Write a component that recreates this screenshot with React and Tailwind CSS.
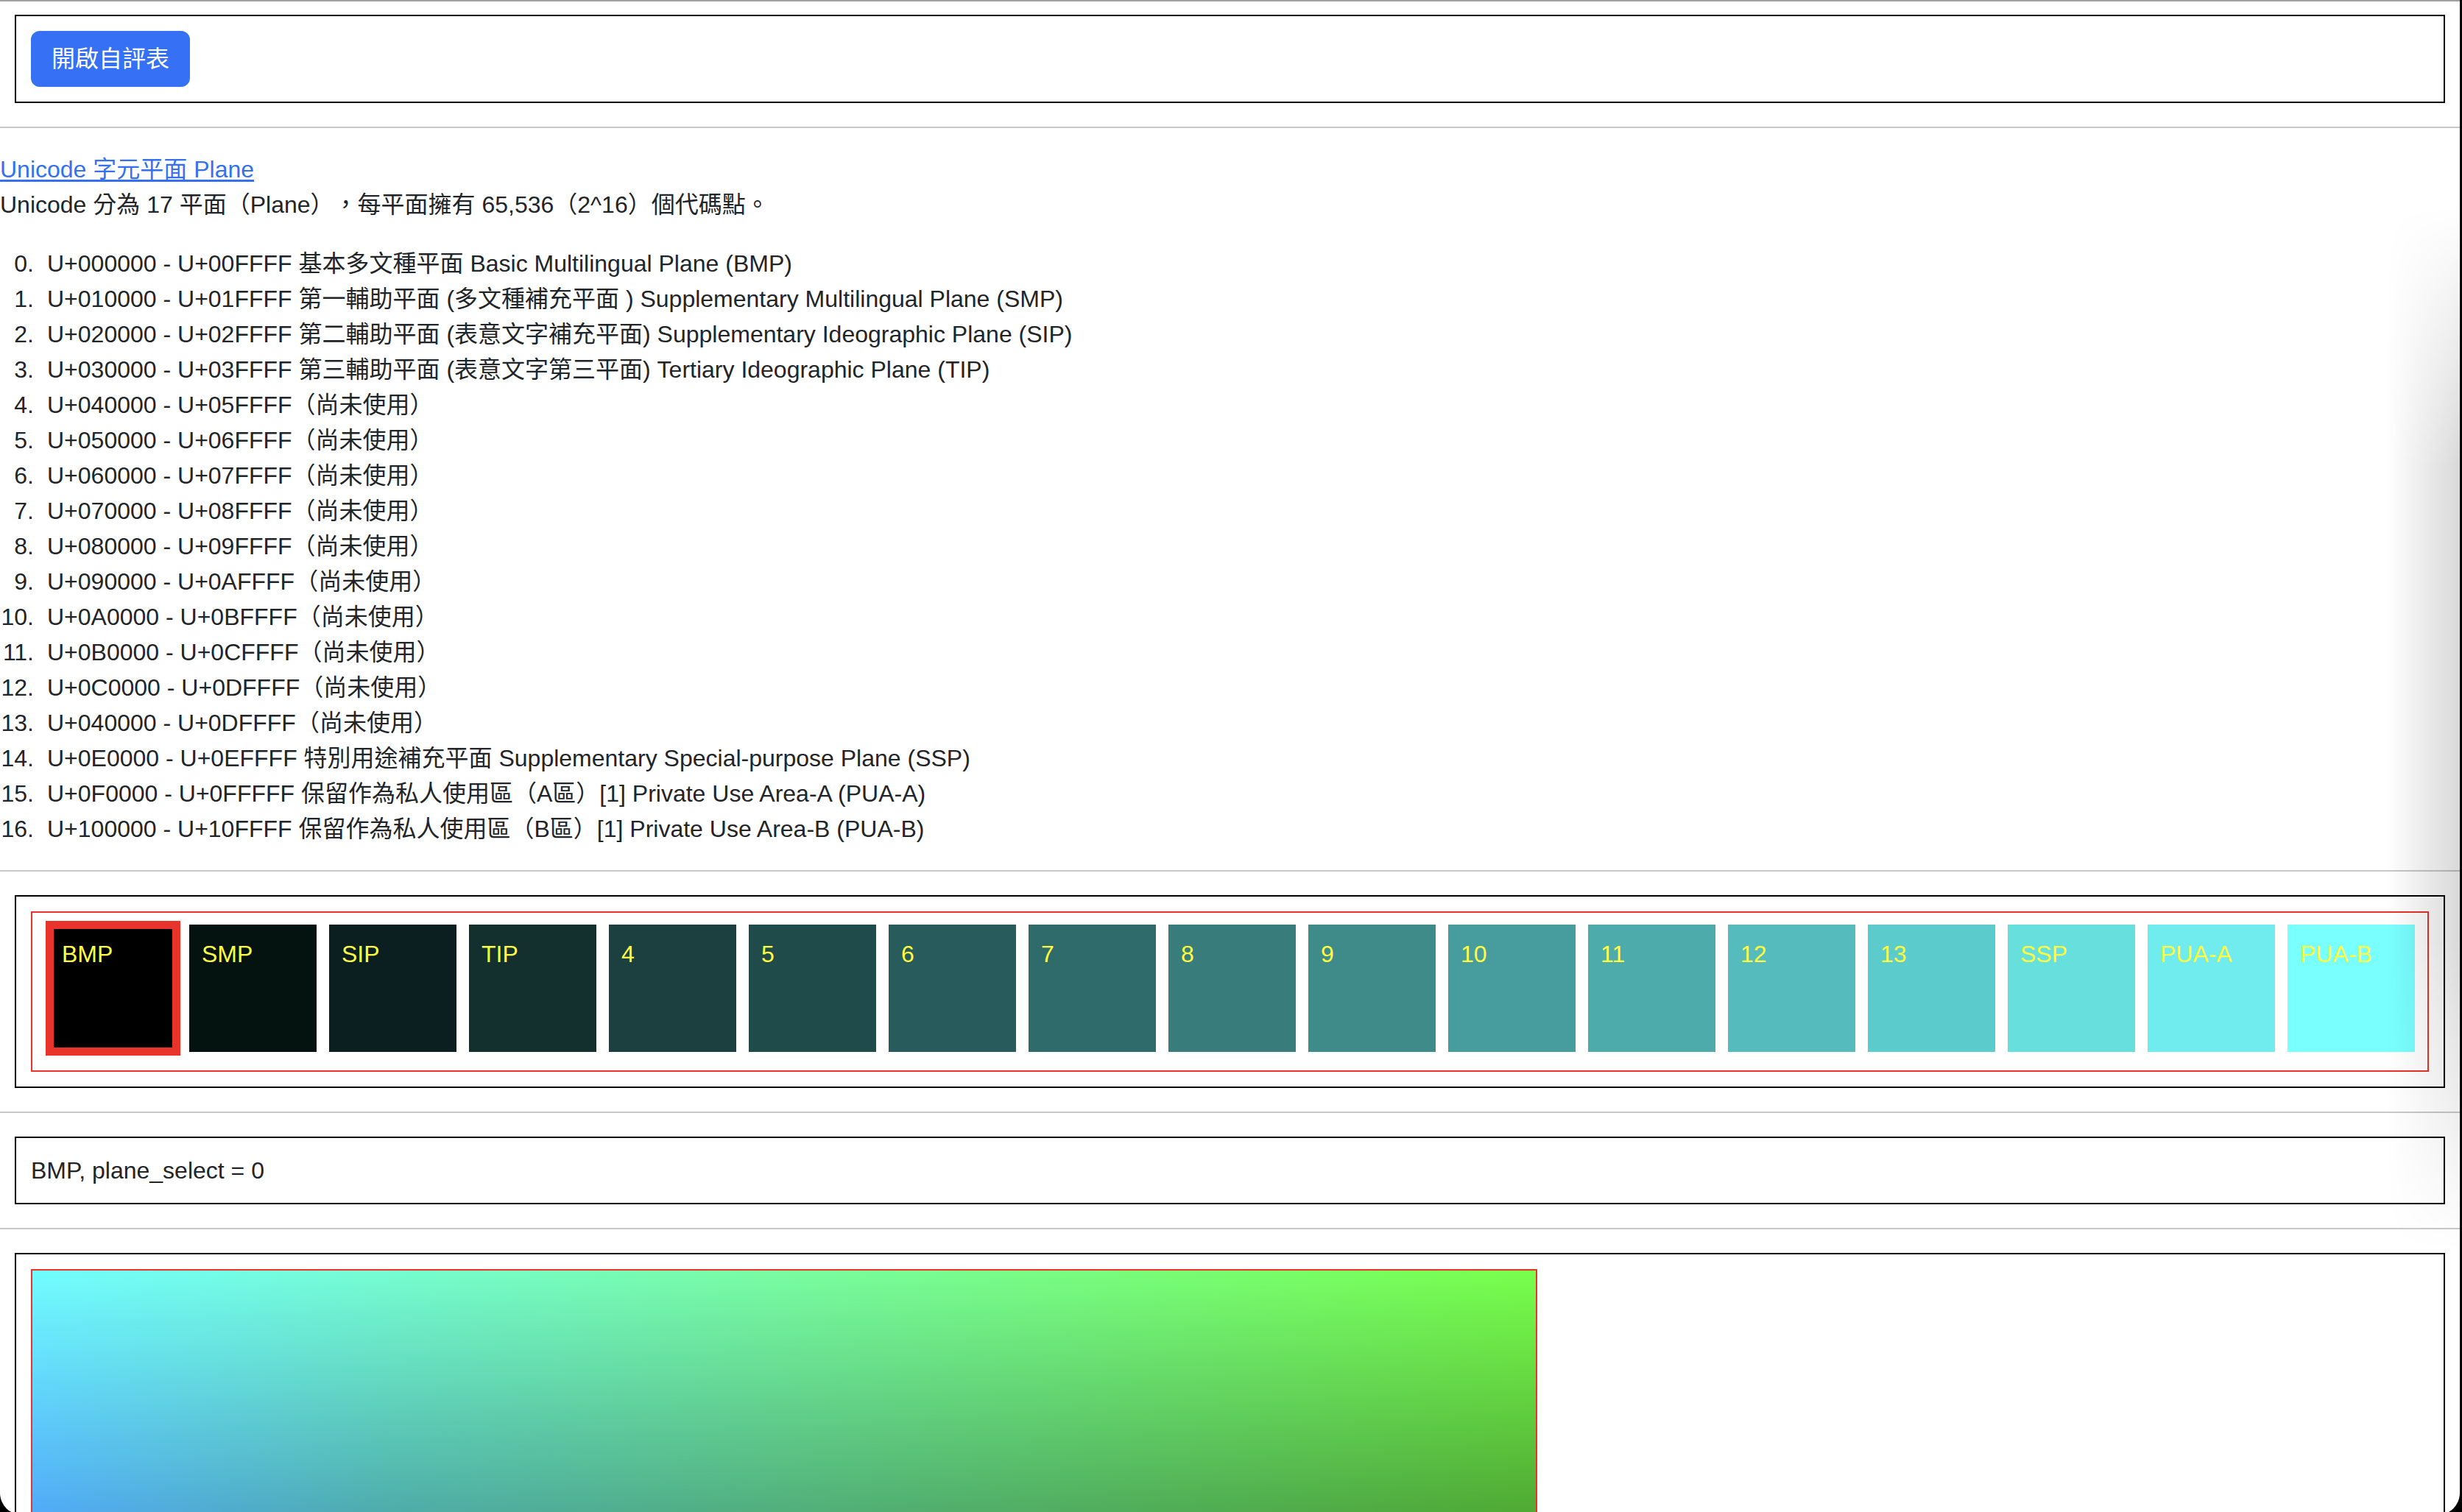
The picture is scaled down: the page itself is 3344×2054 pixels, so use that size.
import React from 'react';

const PLANES = [
  { label: 'BMP', bg: 'bg-[#000000]' },
  { label: 'SMP', bg: 'bg-[#041210]' },
  { label: 'SIP', bg: 'bg-[#0b1e20]' },
  { label: 'TIP', bg: 'bg-[#13302f]' },
  { label: '4', bg: 'bg-[#1b403f]' },
  { label: '5', bg: 'bg-[#1f4c4b]' },
  { label: '6', bg: 'bg-[#285b5b]' },
  { label: '7', bg: 'bg-[#306b6b]' },
  { label: '8', bg: 'bg-[#387d7b]' },
  { label: '9', bg: 'bg-[#3f8b8a]' },
  { label: '10', bg: 'bg-[#479d9e]' },
  { label: '11', bg: 'bg-[#4eabab]' },
  { label: '12', bg: 'bg-[#56bbbd]' },
  { label: '13', bg: 'bg-[#5ccbcc]' },
  { label: 'SSP', bg: 'bg-[#66dfdd]' },
  { label: 'PUA-A', bg: 'bg-[#70ecee]' },
  { label: 'PUA-B', bg: 'bg-[#7affff]' },
];

const RANGES = [
  'U+000000 - U+00FFFF 基本多文種平面 Basic Multilingual Plane (BMP)',
  'U+010000 - U+01FFFF 第一輔助平面 (多文種補充平面 ) Supplementary Multilingual Plane (SMP)',
  'U+020000 - U+02FFFF 第二輔助平面 (表意文字補充平面) Supplementary Ideographic Plane (SIP)',
  'U+030000 - U+03FFFF 第三輔助平面 (表意文字第三平面) Tertiary Ideographic Plane (TIP)',
  'U+040000 - U+05FFFF（尚未使用）',
  'U+050000 - U+06FFFF（尚未使用）',
  'U+060000 - U+07FFFF（尚未使用）',
  'U+070000 - U+08FFFF（尚未使用）',
  'U+080000 - U+09FFFF（尚未使用）',
  'U+090000 - U+0AFFFF（尚未使用）',
  'U+0A0000 - U+0BFFFF（尚未使用）',
  'U+0B0000 - U+0CFFFF（尚未使用）',
  'U+0C0000 - U+0DFFFF（尚未使用）',
  'U+040000 - U+0DFFFF（尚未使用）',
  'U+0E0000 - U+0EFFFF 特別用途補充平面 Supplementary Special-purpose Plane (SSP)',
  'U+0F0000 - U+0FFFFF 保留作為私人使用區（A區）[1] Private Use Area-A (PUA-A)',
  'U+100000 - U+10FFFF 保留作為私人使用區（B區）[1] Private Use Area-B (PUA-B)',
];

const Rule = () => <div className="h-[2px] bg-[#c8c8c8]" />;

const App = () => {
  const selected = 0;

  return (
    <div className="relative h-[2054px] overflow-hidden bg-black">
      <div className="relative h-[2058px] mr-[3px] bg-white rounded-b-[30px] overflow-hidden text-[32px] leading-[48px] text-[#212529] [text-spacing-trim:space-all] font-['Liberation_Sans','Noto_Sans_CJK_TC',sans-serif]">
        <div className="h-[2px] bg-[#a0a0a0]" />

        {/* toolbar */}
        <div className="mt-[18px] mx-[20px] border-2 border-black p-[20px]">
          <button className="h-[76px] px-[26px] border-2 border-[#3670f5] rounded-[12px] bg-[#3670f5] text-white text-[32px] leading-[48px]">
            開啟自評表
          </button>
        </div>

        <div className="mt-[32px]">
          <Rule />
        </div>

        {/* intro */}
        <div className="mt-[32px]">
          <a href="#" className="text-[#3470f0] underline underline-offset-[3px]">
            Unicode 字元平面 Plane
          </a>
          <p>Unicode 分為 17 平面（Plane），每平面擁有 65,536（2^16）個代碼點。</p>
          <ol start={0} className="mt-[32px] mb-[32px] list-none">
            {RANGES.map((r, idx) => (
              <li key={idx} className="flex">
                <span className="w-[46px] shrink-0 text-right">{idx}.</span>
                <span className="ml-[18px]">{r}</span>
              </li>
            ))}
          </ol>
        </div>

        <Rule />

        {/* plane picker */}
        <div className="mt-[32px] mx-[20px] border-2 border-black p-[20px]">
          <div className="h-[218px] border-2 border-[#e8342a] flex items-start gap-[17px] pl-[23px] pt-[16px]">
            {PLANES.map((p, idx) => (
              <div
                key={p.label}
                className={`w-[173px] h-[173px] shrink-0 p-[16px] pl-[17px] text-[#ffff40] ${p.bg} ${
                  idx === selected
                    ? 'shadow-[0_0_0_5px_#e8342a,inset_0_0_0_6px_#e8342a]'
                    : ''
                }`}
              >
                {p.label}
              </div>
            ))}
          </div>
        </div>

        <div className="mt-[32px]">
          <Rule />
        </div>

        {/* status */}
        <div className="mt-[32px] mx-[20px] border-2 border-black p-[20px]">
          {PLANES[selected].label}, plane_select = {selected}
        </div>

        <div className="mt-[32px]">
          <Rule />
        </div>

        {/* canvas */}
        <div className="mt-[32px] mx-[20px] h-[800px] border-2 border-black p-[20px]">
          <div className="relative w-[2046px] h-[700px] border-2 border-[#e8342a] bg-[linear-gradient(to_right,#52acf9_0%,#4fadaa_24%,#52b07c_50%,#50ab33_100%)]">
            <div className="absolute inset-x-0 top-0 h-[326px] bg-[linear-gradient(to_right,#72fdff_0%,#76fdd0_24%,#79fda2_50%,#78ff4c_100%)] [mask-image:linear-gradient(to_bottom,black,transparent)]" />
          </div>
        </div>

        {/* window edge shadow */}
        <div className="pointer-events-none absolute right-0 top-[280px] h-[1420px] w-[100px] bg-linear-to-l from-black/15 to-transparent [mask-image:linear-gradient(to_bottom,transparent,black_25%,black_70%,transparent)]" />
      </div>
    </div>
  );
};

export default App;
